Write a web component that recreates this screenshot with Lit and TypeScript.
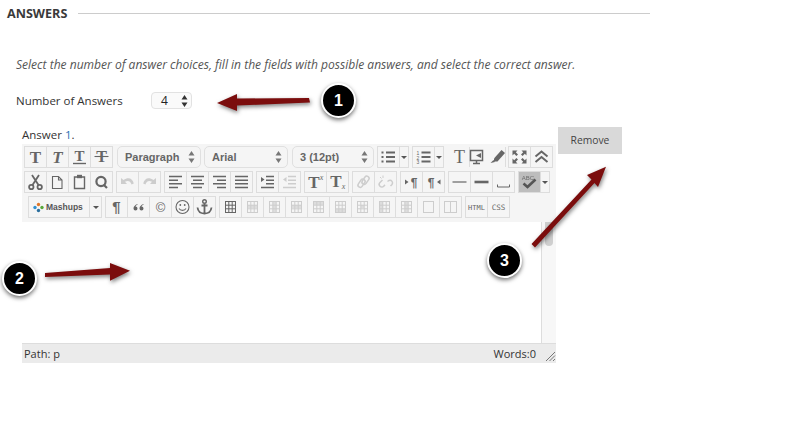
import { LitElement, html, css, svg } from "lit";
import { customElement } from "lit/decorators.js";

const t = (c: string, font: string, size: number, x = 10.5, y = 15, extra = "") =>
  svg`<text x=${x} y=${y} text-anchor="middle" font-family=${font} font-size=${size} font-weight=${extra.includes("b") ? "700" : "400"} font-style=${extra.includes("i") ? "italic" : "normal"} fill="currentColor">${c}</text>`;
const SERIF = "Liberation Serif, serif";
const SANS = "Liberation Sans, sans-serif";

const tbl = (kind: number) => svg`
  <g fill="none" stroke="currentColor" stroke-width="1">
    <rect x="5.5" y="4.5" width="10" height="11"/>
    <path d="M5.5 8.2h10M5.5 11.8h10M8.8 4.5v11M12.2 4.5v11"/>
  </g>
  ${kind > 0 ? svg`<rect x=${[0, 6, 9, 6, 6, 6, 9, 6][kind] ?? 6} y=${[0, 8, 5, 8, 5, 12, 8, 5][kind] ?? 8} width=${[0, 9, 3, 9, 9, 9, 3, 3][kind] ?? 9} height=${[0, 3, 10, 3, 3, 3, 3, 10][kind] ?? 3} fill="currentColor" opacity=".6"/>` : ""}
`;

const icons: Record<string, unknown> = {
  tb: t("T", SERIF, 17, 10.5, 15.5, "b"),
  ti: t("T", SERIF, 17, 10.5, 15.5, "bi"),
  tu: svg`${t("T", SERIF, 15, 10.5, 13.5, "b")}<path d="M4 16.5h13" stroke="currentColor" stroke-width="1.4"/>`,
  ts: svg`${t("T", SERIF, 16, 10.5, 15, "b")}<path d="M3.5 9.5h14" stroke="currentColor" stroke-width="1.1"/>`,
  cut: svg`<g fill="none" stroke="currentColor" stroke-width="1.8"><path d="M7 3l6.5 10M14 3L7.5 13"/><circle cx="6.3" cy="15" r="2.2"/><circle cx="14.7" cy="15" r="2.2"/></g>`,
  doc: svg`<path d="M5.5 4.5h6l3.500 3.500v8.500h-9.500z M11.500 4.500V8h3.500" fill="none" stroke="currentColor" stroke-width="1.1"/>`,
  paste: svg`<path d="M5.5 5h10v11.5h-10z" fill="none" stroke="currentColor" stroke-width="1.4"/><rect x="8" y="2.8" width="5" height="3.4" fill="currentColor"/>`,
  find: svg`<circle cx="10" cy="9.5" r="4.6" fill="none" stroke="currentColor" stroke-width="2.2"/><path d="M12.5 12.5l3.5 3.5" stroke="currentColor" stroke-width="2.2"/>`,
  undo: svg`<path d="M4 6v6h6l-2-2.2c2.8-1.6 5.3-.8 6.6 2.6l2.2-.8C15.600 6.500 11.600 4.700 6.500 8z" fill="currentColor"/>`,
  redo: svg`<path d="M17 6v6h-6l2-2.2c-2.800-1.600-5.300-.8-6.600 2.600l-2.200-.8C5.400 6.500 9.400 4.700 14.500 8z" fill="currentColor"/>`,
  al: svg`<path d="M4 4.500h13M4 8.200h9M4 11.800h13M4 15.500h9" stroke="currentColor" stroke-width="1.600"/>`,
  ac: svg`<path d="M4 4.500h13M6 8.200h9M4 11.800h13M6 15.500h9" stroke="currentColor" stroke-width="1.600"/>`,
  ar: svg`<path d="M4 4.500h13M8 8.200h9M4 11.800h13M8 15.500h9" stroke="currentColor" stroke-width="1.600"/>`,
  aj: svg`<path d="M4 4.500h13M4 8.200h13M4 11.800h13M4 15.500h13" stroke="currentColor" stroke-width="1.600"/>`,
  ind: svg`<path d="M9 4.500h8M9 8.200h8M9 11.800h8M4 15.500h13" stroke="currentColor" stroke-width="1.500"/><path d="M4 5l3.500 2.500L4 10z" fill="currentColor"/>`,
  out: svg`<path d="M9 4.500h8M9 8.200h8M9 11.800h8M4 15.500h13" stroke="currentColor" stroke-width="1.500"/><path d="M7.500 5L4 7.500 7.500 10z" fill="currentColor"/>`,
  sup: svg`${t("T", SERIF, 17, 9, 15.5, "b")}<text x="16.5" y="8" font-family=${SERIF} font-style="italic" font-size="8" fill="currentColor" text-anchor="middle">x</text>`,
  sub: svg`${t("T", SERIF, 17, 9, 14.5, "b")}<text x="16.500" y="17" font-family=${SERIF} font-style="italic" font-size="8" fill="currentColor" text-anchor="middle">x</text>`,
  link: svg`<g fill="none" stroke="currentColor" stroke-width="1.500"><rect x="4" y="9" width="9" height="4.500" rx="2.200" transform="rotate(-55 8.500 11.200)"/><rect x="8" y="6" width="9" height="4.500" rx="2.200" transform="rotate(-55 12.500 8.200)"/></g>`,
  unlink: svg`<g fill="none" stroke="currentColor" stroke-width="1.500"><path d="M7.500 8L5 10.500a2.600 2.600 0 0 0 3.700 3.700l1.300-1.300"/><path d="M12.500 9.500l1.500-1a2.600 2.600 0 0 1 3 4l-1.500 1.500"/></g><path d="M8 3.500v2.500M5 5l1.500 1.500" stroke="currentColor"/>`,
  ltr: svg`<path d="M4 7.500l3.500 2.500L4 12.500z" fill="currentColor"/>${t("¶", SANS, 12, 13, 14.500, "b")}`,
  rtl: svg`${t("¶", SANS, 12, 8, 14.500, "b")}<path d="M17.500 7.500L14 10l3.500 2.500z" fill="currentColor"/>`,
  hr: svg`<path d="M3.500 10h14" stroke="currentColor" stroke-width="1.200"/>`,
  hr2: svg`<path d="M3.500 10h14" stroke="currentColor" stroke-width="2.600"/>`,
  nbsp: svg`<path d="M4.500 12.500v2.500h12v-2.500" fill="none" stroke="currentColor"/>`,
  spell: svg`<text x="9" y="7.500" text-anchor="middle" font-family=${SANS} font-size="6" fill="currentColor" opacity=".8">ABC</text><path d="M4.500 11.500l4 3.500 8-7.500" fill="none" stroke="currentColor" stroke-width="2.600"/>`,
  bul: svg`<path d="M8 5.500h9M8 10h9M8 14.500h9" stroke="currentColor" stroke-width="1.800"/><path d="M3.500 5.500h2M3.500 10h2M3.500 14.500h2" stroke="currentColor" stroke-width="2"/>`,
  num: svg`<path d="M8.500 5.500h9M8.500 10h9M8.500 14.500h9" stroke="currentColor" stroke-width="1.800"/><text x="5" y="8" font-size="5" font-family=${SANS} fill="currentColor" text-anchor="middle">1</text><text x="5" y="12.500" font-size="5" font-family=${SANS} fill="currentColor" text-anchor="middle">2</text><text x="5" y="17" font-size="5" font-family=${SANS} fill="currentColor" text-anchor="middle">3</text>`,
  tplain: t("T", SERIF, 18, 10.5, 16),
  screen: svg`<path d="M.5 3.500h12v10H.5z" fill="none" stroke="currentColor" stroke-width="1.500"/><path d="M3 16.500h7M6.500 13.500v3" fill="none" stroke="currentColor" stroke-width="1.500"/><path d="M11 6v5L6 8.500z" fill="currentColor"/>`,
  marker: svg`<path d="M5 11.500L12.500 3l3.500 3-7.500 8.500H5z" fill="currentColor"/><path d="M1.500 16l3-3 1.500 2z" fill="currentColor"/>`,
  full: svg`<path d="M3.500 3.500h5L6.800 5.200 9 7.400 7.400 9 5.200 6.800 3.500 8.500zM17.500 3.500v5l-1.700-1.700L13.600 9 12 7.400l2.200-2.200-1.700-1.700zM3.500 16.500v-5l1.700 1.700L7.400 11 9 12.600l-2.200 2.200 1.700 1.700zM17.500 16.500h-5l1.700-1.700-2.200-2.200 1.600-1.600 2.200 2.200 1.700-1.700z" fill="currentColor"/>`,
  up: svg`<path d="M4.500 9.500l6-5 6 5M4.500 15l6-5 6 5" fill="none" stroke="currentColor" stroke-width="2"/>`,
  para: t("¶", SANS, 15, 10.5, 15, "b"),
  quote: svg`<path d="M9.500 7C7 8 5.500 9.500 5.500 11.500a2 2 0 1 0 2-2c.2-.7.900-1.300 2-1.700zM15.500 7c-2.500 1-4 2.500-4 4.500a2 2 0 1 0 2-2c.2-.7.900-1.300 2-1.700z" fill="currentColor"/>`,
  copy: t("©", SANS, 13, 10.5, 14.5),
  smile: svg`<circle cx="10.500" cy="10" r="6.500" fill="none" stroke="currentColor" stroke-width="1.100"/><circle cx="8.300" cy="8" r=".9" fill="currentColor"/><circle cx="12.700" cy="8" r=".9" fill="currentColor"/><path d="M7 11.500c1.500 2.500 5.500 2.500 7 0" fill="none" stroke="currentColor" stroke-width="1.100"/>`,
  anchor: svg`<circle cx="10.500" cy="4.500" r="1.800" fill="none" stroke="currentColor" stroke-width="1.400"/><path d="M10.500 6.500V16M7.500 8.500h6M3.500 10.500c.5 4 3.500 6 7 6s6.500-2 7-6" fill="none" stroke="currentColor" stroke-width="1.800"/>`,
  html: t("HTML", "DejaVu Sans Mono, monospace", 7, 10.5, 13),
  cssi: t("CSS", "DejaVu Sans Mono, monospace", 7.5, 10.5, 13),
  cellbox: svg`<rect x="5.500" y="4.500" width="10" height="11" fill="none" stroke="currentColor"/>`,
  split: svg`<rect x="4.500" y="4.500" width="12" height="11" fill="none" stroke="currentColor"/><path d="M10.500 4.500v11" stroke="currentColor"/>`,
};

type B = string | [string, string];

@customElement("app-root")
export class AppRoot extends LitElement {
  static styles = css`
    :host { display: block; position: relative; width: 792px; height: 426px; background: #fff; overflow: hidden; font-family: "Open Sans", sans-serif; color: #333; }
    .head { display: flex; align-items: center; gap: 11px; padding: 5px 142px 0 7px; height: 17px; }
    .head h2 { margin: 0; font-size: 12.6px; line-height: 17px; font-weight: 700; color: #3a3a3a; }
    .head .rule { flex: 1; height: 1px; background: #ccc; }
    .lead { margin: 34px 0 0 16px; font-size: 12.05px; line-height: 18px; font-style: italic; color: #555; }
    .count { display: flex; align-items: center; margin: 18px 0 0 16px; height: 17px; font-size: 11.5px; color: #333; }
    .count label { width: 135px; }
    .num { box-sizing: border-box; width: 41px; height: 17px; border: 1px solid #e2e2e2; border-radius: 4px; background: #fafafa; display: flex; align-items: center; justify-content: space-between; padding: 0 3px 0 9px; font-size: 12px; color: #222; }
    .row { display: flex; align-items: flex-start; margin: 17px 0 0 22px; }
    .editor { width: 534px; }
    .label { font-size: 11.5px; line-height: 18px; color: #333; }
    .label b { font-weight: 400; color: #2a6fb5; }
    .remove { box-sizing: border-box; width: 64px; height: 27px; margin: 1px 0 0 2px; border: 0; padding: 0 0 2px; background: #d9d9d9; color: #444; font: 400 10.3px "Open Sans", sans-serif; display: flex; align-items: center; justify-content: center; }
    .toolbar { background: #f5f5f5; height: 78px; box-sizing: border-box; padding: 2px 0 0 2px; display: flex; flex-direction: column; gap: 3px; }
    .tr { display: flex; gap: 3px; height: 22px; }
    .tr > * { flex: none; }
    .tr.third { padding-left: 4px; }
    .group { display: flex; box-sizing: border-box; height: 22px; border: 1px solid #ddd; border-right: 0; }
    .btn { box-sizing: border-box; flex: none; width: 22px; height: 20px; border-right: 1px solid #ddd; color: #666; display: flex; align-items: center; justify-content: center; }
    .btn.off { color: #cdcdcd; }
    .btn.on { background: #bdbdbd; color: #555; }
    .btn svg { display: block; flex: none; width: 21px; height: 20px; overflow: visible; }
    .caret { width: 9px; }
    .caret::after { content: ""; border: 3px solid transparent; border-top: 3px solid #555; border-bottom: 0; }
    .select { box-sizing: border-box; width: 84px; height: 22px; border: 1px solid #e0e0e0; border-radius: 5px; display: flex; align-items: center; justify-content: space-between; padding: 0 5px 0 7px; font: 700 11px "Liberation Sans", sans-serif; color: #666; }
    .select.first { margin-left: 1px; }
    .select.size { width: 82px; margin-left: 1px; }
    .spin { width: 7px; height: 12px; flex: none; display: block; fill: #777; }
    .num .spin { fill: #333; }
    .tgroup { margin-left: 1px; border-left-color: transparent; border-top-color: transparent; border-bottom-color: transparent; }
    .tgroup .btn:nth-child(1) { width: 21px; }
    .tgroup .btn:nth-child(2) { width: 19px; border-right: 0; justify-content: flex-start; }
    .tgroup .btn:nth-child(3) { width: 17px; justify-content: flex-start; }
    .fgroup { margin-left: -1px; }
    .mash { box-sizing: border-box; width: 74px; height: 22px; border: 1px solid #ddd; display: flex; }
    .mash .name { flex: 1; display: flex; align-items: center; gap: 2px; padding-left: 4px; border-right: 1px solid #ddd; font: 700 8.5px "Liberation Sans", sans-serif; color: #555; }
    .mash svg { width: 11px; height: 11px; }
    .mash .caret { width: 11px; height: 20px; border: 0; }
    .body { display: flex; justify-content: flex-end; height: 121px; background: #fff; }
    .scroll { box-sizing: border-box; width: 15px; border-left: 1px solid #ddd; background: #f7f7f7; padding: 0 3px; }
    .thumb { width: 8px; height: 24px; background: #cfcfcf; border-radius: 0 0 4px 4px; }
    .status { display: flex; align-items: center; height: 20px; background: #ebebeb; border-top: 1px solid #ddd; box-sizing: border-box; font-size: 11px; color: #333; padding-left: 2px; }
    .status .sp { flex: 1; }
    .status svg { width: 12px; height: 12px; margin: 5px 0 0 8px; display: block; }
    .overlay { position: absolute; left: 0; top: 0; width: 792px; height: 426px; pointer-events: none; }
    .overlay polygon { fill: #7b0d0d; filter: drop-shadow(1px 2px 2px rgba(0,0,0,.5)); }
    .mark { position: absolute; box-sizing: border-box; width: 35px; height: 35px; border-radius: 50%; background: #000; border: 2px solid #fff; box-shadow: 0 2px 4px rgba(0,0,0,.55); color: #fff; font: 700 16px/31px "Liberation Sans", sans-serif; text-align: center; }
    .m1 { left: 321px; top: 83px; }
    .m2 { left: 2px; top: 261px; }
    .m3 { left: 487px; top: 243px; }
  `;

  private spin() {
    return html`<svg class="spin" viewBox="0 0 7 12"><path d="M3.500 0L6.500 4.500H.5zM3.500 12L.5 7.500h6z"/></svg>`;
  }

  private group(items: B[], cls = "") {
    return html`<div class="group ${cls}">${items.map((i) => {
      const [name, state] = Array.isArray(i) ? i : [i, ""];
      if (name === "caret") return html`<div class="btn caret"></div>`;
      return html`<div class="btn ${state}"><svg viewBox="0 0 21 20">${icons[name] ?? tbl(Number(name))}</svg></div>`;
    })}</div>`;
  }

  render() {
    const off = (n: string): B => [n, "off"];
    return html`
      <div class="head"><h2>ANSWERS</h2><div class="rule"></div></div>
      <p class="lead">Select the number of answer choices, fill in the fields with possible answers, and select the correct answer.</p>
      <div class="count"><label>Number of Answers</label><div class="num">4 ${this.spin()}</div></div>
      <div class="row">
        <div class="editor">
          <div class="label">Answer <b>1</b>.</div>
          <div class="toolbar">
            <div class="tr">
              ${this.group(["tb", "ti", "tu", "ts"])}
              <div class="select first">Paragraph ${this.spin()}</div>
              <div class="select">Arial ${this.spin()}</div>
              <div class="select size">3 (12pt) ${this.spin()}</div>
              ${this.group(["bul", "caret"])}
              ${this.group(["num", "caret"])}
              ${this.group(["tplain", "screen", "marker"], "tgroup")}
              ${this.group(["full", "up"], "fgroup")}
            </div>
            <div class="tr">
              ${this.group(["cut", "doc", "paste", "find"])}
              ${this.group([off("undo"), off("redo")])}
              ${this.group(["al", "ac", "ar", "aj"])}
              ${this.group(["ind", off("out")])}
              ${this.group(["sup", "sub"])}
              ${this.group([off("link"), off("unlink")])}
              ${this.group(["ltr", "rtl"])}
              ${this.group(["hr", "hr2", "nbsp"])}
              ${this.group([["spell", "on"], "caret"])}
            </div>
            <div class="tr third">
              <div class="mash">
                <div class="name">
                  <svg viewBox="0 0 11 11"><circle cx="2" cy="5.500" r="1.700" fill="#2f8fd0"/><circle cx="5.500" cy="2.500" r="1.700" fill="#e0772a"/><circle cx="9" cy="5.500" r="1.700" fill="#58a83a"/><circle cx="5.500" cy="8.500" r="1.700" fill="#2b6f9e"/></svg>
                  Mashups
                </div>
                <div class="btn caret"></div>
              </div>
              ${this.group(["para", "quote", "copy", "smile", "anchor"])}
              ${this.group(["0", off("1"), off("2"), off("3"), off("4"), off("5"), off("6"), off("7"), off("2"), off("cellbox"), off("split")])}
              ${this.group(["html", "cssi"])}
            </div>
          </div>
          <div class="body"><div class="scroll"><div class="thumb"></div></div></div>
          <div class="status">
            <span>Path: p</span><span class="sp"></span><span>Words:0</span>
            <svg viewBox="0 0 12 12"><path d="M11 2L2 11M11 5.500L5.500 11M11 9l-2 2" stroke="#777" fill="none"/></svg>
          </div>
        </div>
        <div class="remove">Remove</div>
      </div>
      <svg class="overlay" viewBox="0 0 792 426">
        <polygon points="217,103 237,94 237,98.500 309,98 310,102.500 237,105.500 237,111"/>
        <polygon points="130,270.700 110,263 110,268 45,273 45,277 110,274.500 110,280.700"/>
        <polygon points="606,166.700 587,175 591.500,179.500 531.500,244 535,247.500 594.500,183 598,187"/>
      </svg>
      <div class="mark m1">1</div>
      <div class="mark m2">2</div>
      <div class="mark m3">3</div>
    `;
  }
}
